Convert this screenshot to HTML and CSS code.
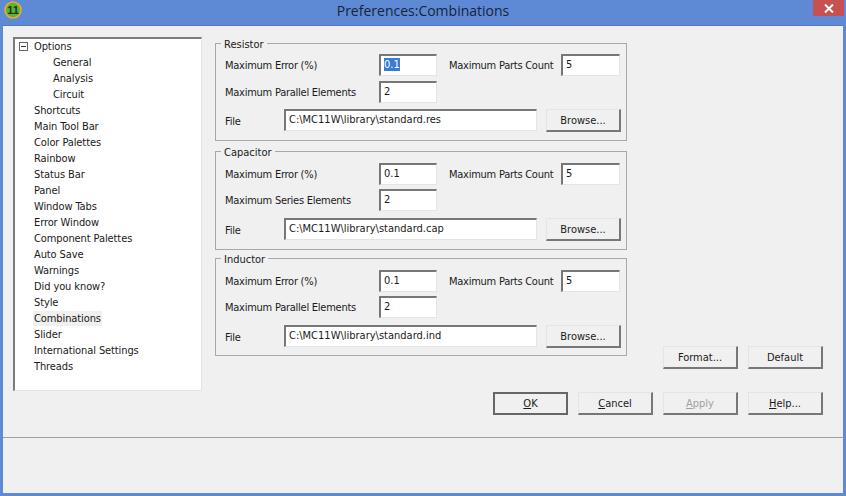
FILE: index.html
```html
<!DOCTYPE html>
<html lang="en">
<head>
<meta charset="utf-8">
<title>Preferences:Combinations</title>
<link rel="stylesheet" href="styles.css">
</head>
<body>
<div class="window">
  <header class="titlebar">
    <svg class="app-icon" width="20" height="20" viewBox="0 0 20 20">
      <circle cx="10" cy="10" r="8" fill="#5cb531" stroke="#e8a93a" stroke-width="1.6"/>
      <text x="10" y="14" text-anchor="middle" class="app-icon-text">11</text>
    </svg>
    <span class="title">Preferences:Combinations</span>
    <span class="close">
      <svg width="10" height="9" viewBox="0 0 10 9"><path d="M1 .5 9 8.5M9 .5 1 8.5" stroke="#fff" stroke-width="2" fill="none"/></svg>
    </span>
  </header>
  <div class="client">
    <div class="upper">
      <nav class="tree">
        <div class="node"><span class="expander"></span>Options</div>
        <div class="node child">General</div>
        <div class="node child">Analysis</div>
        <div class="node child">Circuit</div>
        <div class="node">Shortcuts</div>
        <div class="node">Main Tool Bar</div>
        <div class="node">Color Palettes</div>
        <div class="node">Rainbow</div>
        <div class="node">Status Bar</div>
        <div class="node">Panel</div>
        <div class="node">Window Tabs</div>
        <div class="node">Error Window</div>
        <div class="node">Component Palettes</div>
        <div class="node">Auto Save</div>
        <div class="node">Warnings</div>
        <div class="node">Did you know?</div>
        <div class="node">Style</div>
        <div class="node"><span class="selected">Combinations</span></div>
        <div class="node">Slider</div>
        <div class="node">International Settings</div>
        <div class="node">Threads</div>
      </nav>
      <div class="groups">
        <fieldset class="group tight">
          <legend>Resistor</legend>
          <label class="lbl">Maximum Error (%)</label>
          <span class="field short"><span class="sel">0.1</span></span>
          <label class="lbl lbl2">Maximum Parts Count</label>
          <span class="field count">5</span>
          <label class="lbl">Maximum Parallel Elements</label>
          <span class="field short">2</span>
          <div class="file-row">
            <label class="lbl file-lbl">File</label>
            <span class="field path">C:\MC11W\library\standard.res</span>
            <button class="btn browse" type="button">Browse...</button>
          </div>
        </fieldset>
        <fieldset class="group tall">
          <legend>Capacitor</legend>
          <label class="lbl">Maximum Error (%)</label>
          <span class="field short">0.1</span>
          <label class="lbl lbl2">Maximum Parts Count</label>
          <span class="field count">5</span>
          <label class="lbl">Maximum Series Elements</label>
          <span class="field short">2</span>
          <div class="file-row">
            <label class="lbl file-lbl">File</label>
            <span class="field path">C:\MC11W\library\standard.cap</span>
            <button class="btn browse" type="button">Browse...</button>
          </div>
        </fieldset>
        <fieldset class="group">
          <legend>Inductor</legend>
          <label class="lbl">Maximum Error (%)</label>
          <span class="field short">0.1</span>
          <label class="lbl lbl2">Maximum Parts Count</label>
          <span class="field count">5</span>
          <label class="lbl">Maximum Parallel Elements</label>
          <span class="field short">2</span>
          <div class="file-row">
            <label class="lbl file-lbl">File</label>
            <span class="field path">C:\MC11W\library\standard.ind</span>
            <button class="btn browse" type="button">Browse...</button>
          </div>
        </fieldset>
      </div>
      <div class="side">
        <button class="btn" type="button">Format...</button>
        <button class="btn" type="button">Default</button>
      </div>
    </div>
    <div class="actions">
      <button class="btn default" type="button"><u>O</u>K</button>
      <button class="btn" type="button"><u>C</u>ancel</button>
      <button class="btn disabled" type="button"><u>A</u>pply</button>
      <button class="btn" type="button"><u>H</u>elp...</button>
    </div>
    <div class="status"></div>
  </div>
</div>
</body>
</html>
```
FILE: styles.css
```css
* { box-sizing: border-box; }
html, body { margin: 0; padding: 0; }
body {
  width: 846px;
  height: 496px;
  overflow: hidden;
  font-family: "DejaVu Sans Condensed", "DejaVu Sans", sans-serif;
  font-size: 11px;
  color: #1a1a1a;
}
.window {
  width: 846px;
  height: 496px;
  background: #5e8ad5;
  padding: 0 3px 3px;
  display: flex;
  flex-direction: column;
}
.titlebar {
  height: 25px;
  flex: none;
  display: flex;
  align-items: flex-start;
  position: relative;
  margin: 0 -3px;
}
.app-icon { position: absolute; left: 3px; top: 0; }
.app-icon-text {
  font-family: "Liberation Sans Narrow", "Liberation Sans", sans-serif;
  font-size: 11px;
  font-weight: 700;
  fill: #24301a;
}
.title {
  flex: 1;
  text-align: center;
  font-family: "Open Sans", sans-serif;
  font-size: 14px;
  line-height: 22px;
  color: #16233a;
}
.close {
  position: absolute;
  right: 2px;
  top: 0;
  width: 31px;
  height: 16px;
  background: #c75050;
  display: flex;
  align-items: center;
  justify-content: center;
}
.client {
  flex: 1;
  background: #f0f0f0;
  display: flex;
  flex-direction: column;
  border-top: 1px solid #5378bd;
}
.upper {
  display: flex;
  align-items: flex-start;
  padding: 11px 0 0 10px;
  height: 365px;
  flex: none;
}
.tree {
  width: 189px;
  height: 354px;
  flex: none;
  background: #fff;
  border-style: solid;
  border-width: 2px 1px 1px 2px;
  border-color: #7c7c7c #e2e2e2 #e2e2e2 #7c7c7c;
  margin-right: 13px;
}
.node {
  height: 16px;
  line-height: 16px;
  padding-left: 19px;
  letter-spacing: -.1px;
  white-space: nowrap;
  position: relative;
}
.child { padding-left: 38px; }
.selected {
  background: #f0f0f0;
  display: inline-block;
  height: 15px;
  line-height: 15px;
  padding: 0 1px;
  margin-left: -1px;
}
.expander {
  position: absolute;
  left: 4px;
  top: 3px;
  width: 9px;
  height: 9px;
  border: 1px solid #666;
  background: linear-gradient(#333, #333) center / 5px 1px no-repeat #fff;
}
.groups {
  width: 412px;
  flex: none;
  display: flex;
  flex-direction: column;
  gap: 2px;
  margin-top: -1px;
}
.group {
  margin: 0;
  min-width: 0;
  height: 105px;
  border: 1px solid #a8a8a8;
  padding: 4px 6px 0 9px;
  display: grid;
  grid-template-columns: 154px 58px 124px 59px;
  grid-template-rows: 22px 22px 23px;
  row-gap: 4px;
  align-items: center;
}
.tight {
  padding-top: 3px;
  row-gap: 5px;
  margin-bottom: 1px;
}
.tall {
  height: 106px;
  margin-bottom: -1px;
}
.group legend {
  padding: 2px 3px 0;
  margin-left: -4px;
  line-height: 13px;
  font-size: 11px;
}
.lbl { white-space: nowrap; letter-spacing: -.25px; }
.lbl2 { padding-left: 12px; }
.field {
  display: block;
  height: 22px;
  background: #fff;
  border-style: solid;
  border-width: 2px 1px 1px 2px;
  border-color: #777 #e4e4e4 #e4e4e4 #777;
  padding-left: 3px;
  line-height: 18px;
  font-size: 11px;
  white-space: nowrap;
  overflow: hidden;
}
.sel { background: #3a7bd5; color: #fff; }
.file-row {
  grid-column: 1 / -1;
  align-self: start;
  display: flex;
  align-items: flex-start;
  margin-top: 3px;
}
.tight .file-row { margin-top: 1px; }
.file-lbl { flex: none; width: 59px; line-height: 26px; }
.path { flex: none; width: 253px; margin-right: 9px; line-height: 17px; }
.btn {
  display: block;
  width: 75px;
  height: 23px;
  padding: 0;
  background: #f0f0f0;
  font: inherit;
  color: inherit;
  text-align: center;
  border-style: solid;
  border-width: 1px 2px 2px 1px;
  border-color: #e4e4e4 #777 #777 #e4e4e4;
}
.browse { flex: none; }
.side {
  align-self: flex-start;
  margin: 309px 0 0 36px;
  display: flex;
  gap: 10px;
}
.actions {
  display: flex;
  gap: 10px;
  padding-left: 490px;
  margin-top: 1px;
}
.default { border: 2px solid #666; }
.disabled { color: #a0a0a0; }
.status {
  margin-top: 22px;
  flex: 1;
  border-top: 1px solid #a0a0a0;
}
```
